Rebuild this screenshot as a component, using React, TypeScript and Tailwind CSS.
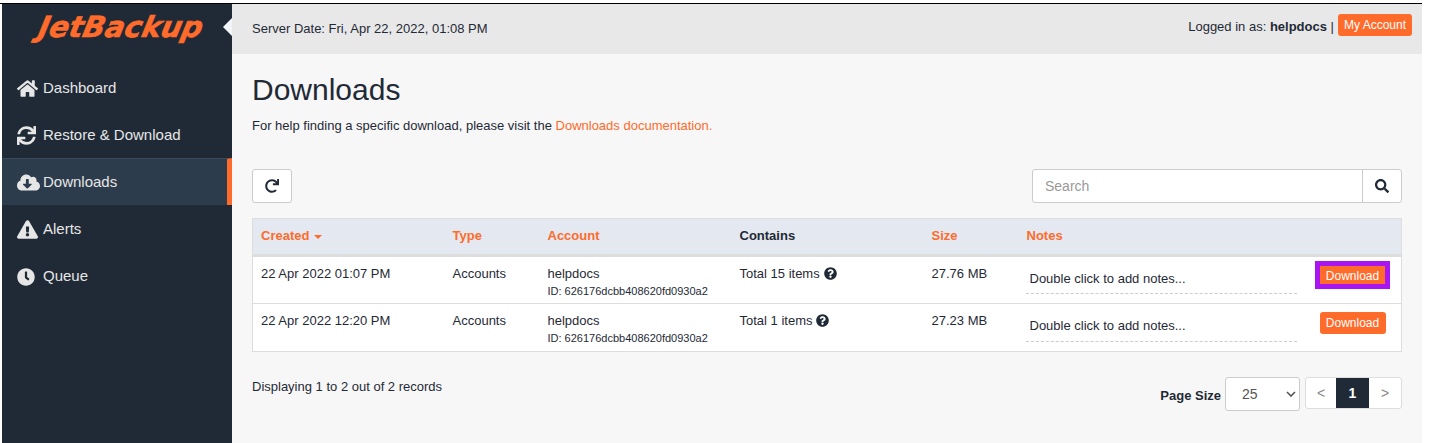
import { FaHome, FaSync, FaCloudDownloadAlt, FaExclamationTriangle, FaClock, FaRedo, FaSearch, FaQuestionCircle } from "react-icons/fa";

const nav = [
  { label: "Dashboard", Icon: FaHome, size: "text-[21px]" },
  { label: "Restore & Download", Icon: FaSync, size: "text-[19px]" },
  { label: "Downloads", Icon: FaCloudDownloadAlt, size: "text-[23px]", active: true },
  { label: "Alerts", Icon: FaExclamationTriangle, size: "text-[21px]" },
  { label: "Queue", Icon: FaClock, size: "text-[18px]" },
];

const rows = [
  { created: "22 Apr 2022 01:07 PM", total: "Total 15 items", size: "27.76 MB", focus: true },
  { created: "22 Apr 2022 12:20 PM", total: "Total 1 items", size: "27.23 MB", focus: false },
];

function Th({ children, className = "" }: { children?: React.ReactNode; className?: string }) {
  return <th className={`h-[37px] px-2 pb-[1px] text-left align-middle text-[13px] font-bold text-[#ff6b2b] ${className}`}>{children}</th>;
}

export default function App() {
  return (
    <div className="flex h-[443px] w-[1429px] flex-col overflow-hidden bg-white pr-[7px] font-['Liberation_Sans',Arial,sans-serif] text-[#1f2a36]">
      <div className="mt-[3px] h-px w-full bg-black" />
      <div className="flex min-h-0 flex-1 pl-[2px]">
        <aside className="flex w-[230px] shrink-0 flex-col bg-[#1f2a36] text-[#e6e6e6]">
          <div className="relative flex h-[50px] items-center justify-center pb-[4px] pl-[7px]">
            <span className="text-[29px] leading-none font-bold text-[#ff6b2b] italic font-['DejaVu_Sans',sans-serif] [-webkit-text-stroke:0.6px_#ff6b2b] [transform:skewX(-12deg)]">JetBackup</span>
            <span className="absolute right-0 top-[14px] h-0 w-0 border-y-[9px] border-r-[9px] border-y-transparent border-r-[#f2f5fa]" />
          </div>
          <nav className="mt-[10px] flex flex-col">
            {nav.map(({ label, Icon, active, size }) => (
              <div
                key={label}
                className={`flex h-[47px] items-center pl-[15px] text-[15px] ${active ? "border-r-[5px] border-t border-r-[#ff6b2b] border-t-[#3b4a5a] bg-[#2c3c4c]" : "pt-[2px]"}`}
              >
                <span className="flex w-[26px] justify-start"><Icon className={size} /></span>
                <span>{label}</span>
              </div>
            ))}
          </nav>
        </aside>

        <main className="flex min-w-0 flex-1 flex-col bg-[#f7f7f7]">
          <header className="flex h-[50px] shrink-0 items-center justify-between bg-[#e8e8e8] pl-5 pr-[10px] text-[13px]">
            <span>Server Date: Fri, Apr 22, 2022, 01:08 PM</span>
            <div className="mb-[8px] flex items-center gap-[4px]">
              <span className="mt-[3px]">Logged in as: <b>helpdocs</b> <span>|</span></span>
              <button className="flex h-[22px] items-center rounded-[3px] bg-[#ff6b2b] px-[6px] text-[12px] text-white">My Account</button>
            </div>
          </header>

          <div className="flex min-h-0 flex-1 flex-col px-5">
            <h1 className="mt-[18px] text-[30px] leading-[36px] font-normal">Downloads</h1>
            <p className="mt-[8px] text-[13px] leading-[20px]">
              For help finding a specific download, please visit the <span className="text-[#ff6b2b]">Downloads documentation.</span>
            </p>

            <div className="mt-[33px] flex items-center justify-between">
              <button className="flex h-[34px] w-10 items-center justify-center rounded-[3px] border border-[#ccc] bg-white">
                <FaRedo className="text-[14px]" />
              </button>
              <div className="flex h-[34px] w-[370px] rounded-[3px] border border-[#ccc] bg-white">
                <div className="flex flex-1 items-center px-3 text-[14px] text-[#999]">Search</div>
                <div className="flex w-[39px] items-center justify-center border-l border-[#ccc]"><FaSearch className="text-[14px]" /></div>
              </div>
            </div>

            <table className="mt-[15px] w-[1149px] table-fixed border-collapse border border-[#ddd] bg-white text-[13px]">
              <colgroup>
                <col className="w-[192px]" />
                <col className="w-[95px]" />
                <col className="w-[192px]" />
                <col className="w-[192px]" />
                <col className="w-[95px]" />
                <col className="w-[289px]" />
                <col className="w-[94px]" />
              </colgroup>
              <thead>
                <tr className="bg-[#e4e8f0]">
                  <Th>Created <span className="ml-[1px] inline-block h-0 w-0 border-x-[4px] border-t-[4px] border-x-transparent border-t-[#ff6b2b] align-middle" /></Th>
                  <Th>Type</Th>
                  <Th>Account</Th>
                  <Th className="!text-[#1f2a36]">Contains</Th>
                  <Th>Size</Th>
                  <Th>Notes</Th>
                  <Th />
                </tr>
              </thead>
              <tbody>
                {rows.map((r) => (
                  <tr key={r.created} className="h-[48px] border-t-[3px] border-[#ddd] align-top [&+tr]:border-t">
                    <td className="px-2 pt-[7px]">{r.created}</td>
                    <td className="px-2 pt-[7px]">Accounts</td>
                    <td className="px-2 pt-[7px]">
                      <div>helpdocs</div>
                      <div className="text-[11px] leading-[14px]">ID: 626176dcbb408620fd0930a2</div>
                    </td>
                    <td className="px-2 pt-[7px]">
                      <span className="inline-flex items-center gap-[4px]">{r.total} <FaQuestionCircle className="text-[13px]" /></span>
                    </td>
                    <td className="px-2 pt-[7px]">{r.size}</td>
                    <td className="pl-[7px] pr-2 pt-[8px]">
                      <div className={`w-[271px] border-b border-dashed border-[#ccc] pl-1 pt-[4px] ${r.focus ? "h-[29px]" : "h-[30px]"}`}>Double click to add notes...</div>
                    </td>
                    <td className={`pl-[12px] ${r.focus ? "pt-[9px]" : "pt-[8px]"}`}>
                      {r.focus ? (
                        <button className="flex h-[18px] w-[65px] items-center justify-center bg-[#ff6b2b] pt-[1px] pl-[1px] text-[12px] text-white outline-[5px] outline-[#a815f2]">Download</button>
                      ) : (
                        <button className="flex h-[22px] w-[66px] items-center justify-center rounded-[3px] bg-[#ff6b2b] text-[12px] text-white">Download</button>
                      )}
                    </td>
                  </tr>
                ))}
              </tbody>
            </table>

            <div className="mt-[25px] flex items-start justify-between">
              <span className="text-[13px]">Displaying 1 to 2 out of 2 records</span>
              <div className="flex items-start gap-[4px]">
                <span className="mt-[9px] text-[13px] font-bold">Page Size</span>
                <div className="flex h-[34px] w-[75px] items-center justify-between rounded-[3px] border border-[#ccc] bg-white pl-4 pr-[3px] text-[14px] text-[#555]">
                  <span>25</span>
                  <svg width="10" height="6" viewBox="0 0 10 6" fill="none" stroke="#555" strokeWidth="1.6"><path d="M1 1l4 4 4-4" /></svg>
                </div>
                <div className="ml-[1px] flex h-8 overflow-hidden rounded-[3px] border border-[#ddd] bg-white text-[14px] text-[#888]">
                  <span className="flex w-[30px] items-center justify-center">&lt;</span>
                  <span className="flex w-[33px] items-center justify-center bg-[#1f2a36] font-bold text-white">1</span>
                  <span className="flex w-[32px] items-center justify-center">&gt;</span>
                </div>
              </div>
            </div>
          </div>
        </main>
      </div>
    </div>
  );
}
